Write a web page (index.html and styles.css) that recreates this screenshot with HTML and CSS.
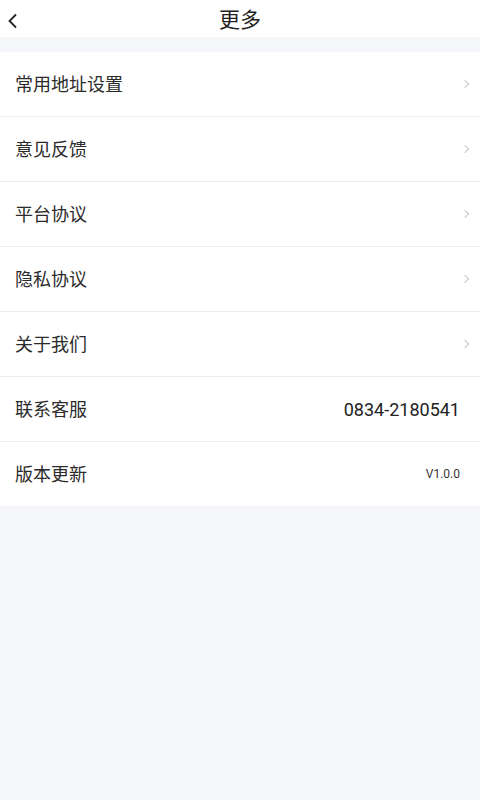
FILE: index.html
```html
<!DOCTYPE html>
<html>
<head>
<meta charset="utf-8" />
<title>更多</title>
<link rel="stylesheet" href="styles.css">
</head>
<body>
<div class="header">
	<span class="back">
		<svg width="12" height="16" viewBox="0 0 12 16"><path d="M9 1.5 L2.5 8 L9 14.5" fill="none" stroke="#222" stroke-width="1.8"/></svg>
	</span>
	<span class="title">更多</span>
</div>
<ul class="list">
	<li><span class="label">常用地址设置</span><span class="arrow"></span></li>
	<li><span class="label">意见反馈</span><span class="arrow"></span></li>
	<li><span class="label">平台协议</span><span class="arrow"></span></li>
	<li><span class="label">隐私协议</span><span class="arrow"></span></li>
	<li><span class="label">关于我们</span><span class="arrow"></span></li>
	<li><span class="label">联系客服</span><span class="phone">0834-2180541</span></li>
	<li><span class="label">版本更新</span><span class="version">V1.0.0</span></li>
</ul>
</body>
</html>
```

FILE: styles.css
```css
* {padding:0;margin:0;}
html, body {height:100%;}
body {background:#f5f6fa;font-family:"Noto Sans CJK SC","Noto Sans",sans-serif;color:#333;}
/*标题栏*/
.header {height:37px;background:#fff;position:relative;display:flex;align-items:center;justify-content:center;}
.header .back {position:absolute;left:7px;top:10px;}
.header .title {font-size:21px;color:#222;line-height:37px;}
/*列表*/
.list {list-style:none;margin-top:15px;background:#fff;}
.list li {height:64px;border-bottom:1px solid #ebebeb;display:flex;align-items:center;justify-content:space-between;padding:0 20px 0 15px;}
.list li:last-child {border-bottom:none;}
.list .label {font-size:18px;color:#2b2b2b;margin-top:-2px;}
.list .arrow {width:5px;height:5px;border-top:1px solid #c8c8c8;border-right:1px solid #c8c8c8;transform:rotate(45deg);margin-right:-8px;}
.list .phone {font-family:"Roboto",sans-serif;font-size:18px;color:#222;}
.list .version {font-family:"Roboto",sans-serif;font-size:12px;color:#333;}
```
